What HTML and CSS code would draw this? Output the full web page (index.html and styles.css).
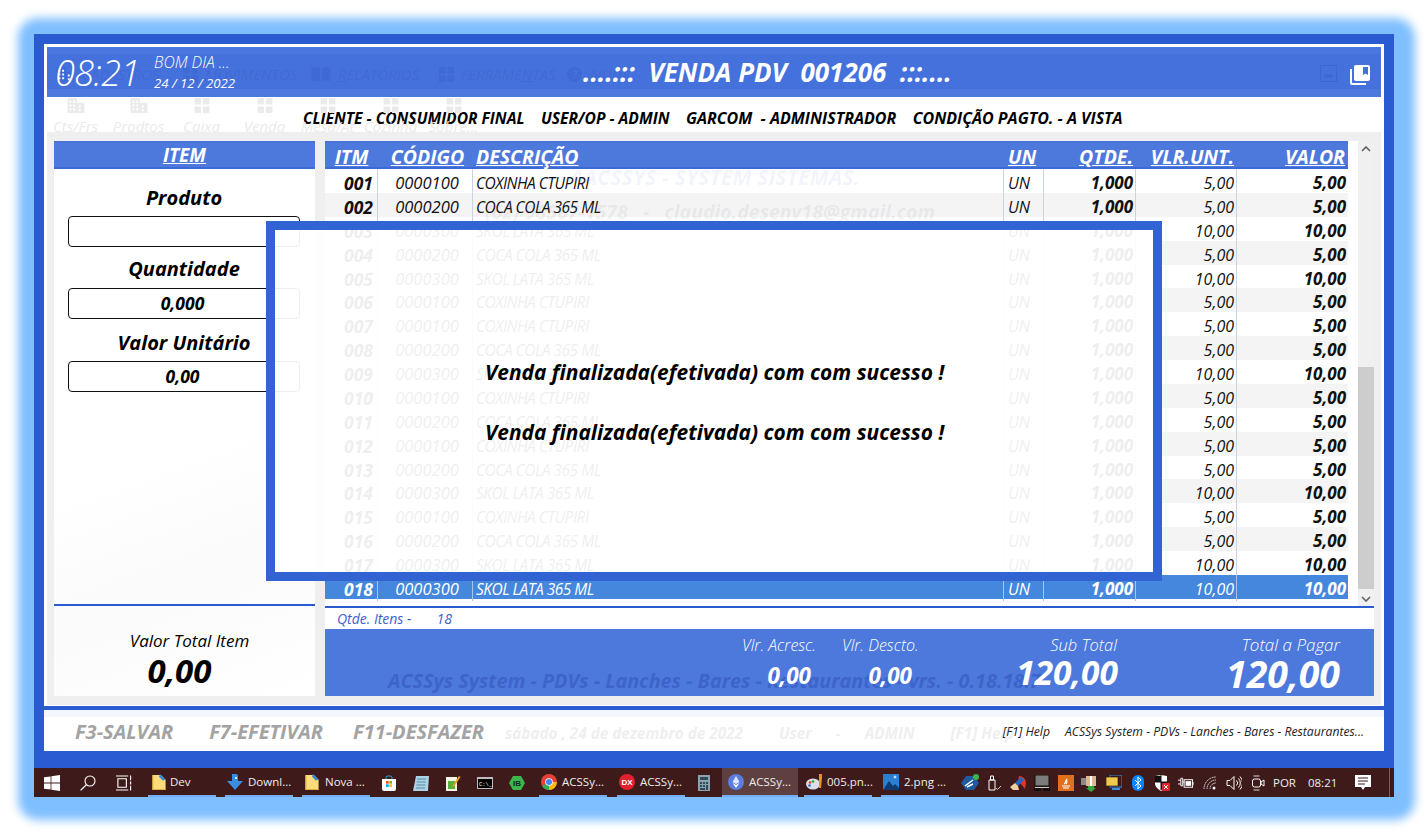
FILE: index.html
```html
<!DOCTYPE html>
<html lang="pt-BR">
<head>
    <meta charset="UTF-8">
    <title>ACSSys - Venda PDV</title>
    <link rel="stylesheet" href="styles.css">
</head>
<body>

<svg class="defs" width="0" height="0">
    <symbol id="i-build" viewBox="0 0 18 16"><path d="M0 0h10v16H0zM10 5h8v11h-8z" fill="currentColor"/><path d="M2 3h2v2H2zM6 3h2v2H6zM2 7h2v2H2zM6 7h2v2H6zM2 11h2v2H2zM6 11h2v2H6zM12 8h2v2h-2zM12 12h2v2h-2z" fill="#fff"/></symbol>
    <symbol id="i-tiles" viewBox="0 0 16 16"><path d="M0 0h7v7H0zM9 0h7v7H9zM0 9h7v7H0zM9 9h7v7H9z" fill="currentColor"/></symbol>
    <symbol id="i-book" viewBox="0 0 20 16"><path d="M0 1c3-1 7-1 9 1v14c-2-2-6-2-9-1zM20 1c-3-1-7-1-9 1v14c2-2 6-2 9-1z" fill="currentColor"/></symbol>
    <symbol id="i-folder" viewBox="0 0 14 17"><path d="M0 1h9l5 5v11H0z" fill="#fbdc7b"/><path d="M0 16h14v1H0zM0 1h1v16H0z" fill="#e0b040"/><path d="M8 0l6 6-3 1-4-4z" fill="#3a87d8"/></symbol>
</svg>

<div class="window">
    <div class="main">
        <div class="upper">
            <header class="titlebar">
                <div class="ghost-menu">
                    <div><svg class="gm-wide"><use href="#i-build"/></svg><span>CADASTROS</span></div>
                    <div><svg><use href="#i-tiles"/></svg><span>MOVIMENTOS</span></div>
                    <div><svg class="gm-wide"><use href="#i-book"/></svg><span><u>R</u>ELATÓRIOS</span></div>
                    <div><svg><use href="#i-tiles"/></svg><span>FERRAME<u>N</u>TAS</span></div>
                    <div><span class="ghost-help">?</span><span>AJUDA</span></div>
                </div>
                <div class="clock">08:21</div>
                <div class="greet">
                    <div>BOM DIA ...</div>
                    <div class="greet-date">24 / 12 / 2022</div>
                </div>
                <h1 class="page-title">....:::  VENDA PDV  001206  :::....</h1>
                <svg class="ico-image" viewBox="0 0 18 18"><rect x="0.5" y="0.5" width="17" height="17" fill="none" stroke="currentColor"/><path d="M4 13l3-4 2 2 2-2 3 4z" fill="currentColor"/></svg>
                <svg class="ico-books" viewBox="2 2 20 20"><path fill="#fff" d="M4 6H2v14c0 1.1.9 2 2 2h14v-2H4V6zm16-4H8c-1.1 0-2 .9-2 2v12c0 1.1.9 2 2 2h12c1.1 0 2-.9 2-2V4c0-1.1-.9-2-2-2zm0 10l-2.5-1.5L15 12V4h5v8z"/></svg>
            </header>

            <div class="infobar">
                <div class="ghost-tools">
                    <div><svg><use href="#i-build"/></svg>Cts/Frs</div>
                    <div><svg><use href="#i-build"/></svg>Prodtos</div>
                    <div><svg><use href="#i-tiles"/></svg>Caixa</div>
                    <div><svg><use href="#i-tiles"/></svg>Venda</div>
                    <div><svg><use href="#i-tiles"/></svg>Mesa/At</div>
                    <div><svg><use href="#i-tiles"/></svg>Cozinha</div>
                    <div><svg><use href="#i-tiles"/></svg>Sobre...</div>
                </div>
                <span>CLIENTE - CONSUMIDOR FINAL</span>
                <span>USER/OP - ADMIN</span>
                <span class="info-wide">GARCOM  - ADMINISTRADOR</span>
                <span class="info-wide">CONDIÇÃO PAGTO. - A VISTA</span>
            </div>

            <div class="content">
                <aside class="item-panel">
                    <div class="panel-head">ITEM</div>
                    <div class="item-form">
                        <label class="field-label">Produto</label>
                        <div class="field"></div>
                        <label class="field-label label-qty">Quantidade</label>
                        <div class="field field-qty">0,000</div>
                        <label class="field-label">Valor Unitário</label>
                        <div class="field">0,00</div>
                    </div>
                    <div class="item-total">
                        <div class="item-total-label">Valor Total Item</div>
                        <div class="item-total-value">0,00</div>
                    </div>
                </aside>

                <section class="sale">
                    <div class="grid-wrap">
                        <div class="ghost-company">AACSSYS - SYSTEM SISTEMAS.</div>
                        <div class="ghost-contact">(62) 98567-1578   -   claudio.desenv18@gmail.com</div>
                        <div class="grid">
                            <div class="row row-head"><span class="c-itm">ITM</span><span class="c-cod">CÓDIGO</span><span class="c-desc">DESCRIÇÃO</span><span class="c-un">UN</span><span class="c-num">QTDE.</span><span class="c-num">VLR.UNT.</span><span class="c-num">VALOR</span></div>
                            <div class="row"><span class="c-itm">001</span><span class="c-cod">0000100</span><span class="c-desc">COXINHA CTUPIRI</span><span class="c-un">UN</span><span class="c-num b">1,000</span><span class="c-num">5,00</span><span class="c-num b">5,00</span></div>
                            <div class="row"><span class="c-itm">002</span><span class="c-cod">0000200</span><span class="c-desc">COCA COLA 365 ML</span><span class="c-un">UN</span><span class="c-num b">1,000</span><span class="c-num">5,00</span><span class="c-num b">5,00</span></div>
                            <div class="row"><span class="c-itm">003</span><span class="c-cod">0000300</span><span class="c-desc">SKOL LATA 365 ML</span><span class="c-un">UN</span><span class="c-num b">1,000</span><span class="c-num">10,00</span><span class="c-num b">10,00</span></div>
                            <div class="row"><span class="c-itm">004</span><span class="c-cod">0000200</span><span class="c-desc">COCA COLA 365 ML</span><span class="c-un">UN</span><span class="c-num b">1,000</span><span class="c-num">5,00</span><span class="c-num b">5,00</span></div>
                            <div class="row"><span class="c-itm">005</span><span class="c-cod">0000300</span><span class="c-desc">SKOL LATA 365 ML</span><span class="c-un">UN</span><span class="c-num b">1,000</span><span class="c-num">10,00</span><span class="c-num b">10,00</span></div>
                            <div class="row"><span class="c-itm">006</span><span class="c-cod">0000100</span><span class="c-desc">COXINHA CTUPIRI</span><span class="c-un">UN</span><span class="c-num b">1,000</span><span class="c-num">5,00</span><span class="c-num b">5,00</span></div>
                            <div class="row"><span class="c-itm">007</span><span class="c-cod">0000100</span><span class="c-desc">COXINHA CTUPIRI</span><span class="c-un">UN</span><span class="c-num b">1,000</span><span class="c-num">5,00</span><span class="c-num b">5,00</span></div>
                            <div class="row"><span class="c-itm">008</span><span class="c-cod">0000200</span><span class="c-desc">COCA COLA 365 ML</span><span class="c-un">UN</span><span class="c-num b">1,000</span><span class="c-num">5,00</span><span class="c-num b">5,00</span></div>
                            <div class="row"><span class="c-itm">009</span><span class="c-cod">0000300</span><span class="c-desc">SKOL LATA 365 ML</span><span class="c-un">UN</span><span class="c-num b">1,000</span><span class="c-num">10,00</span><span class="c-num b">10,00</span></div>
                            <div class="row"><span class="c-itm">010</span><span class="c-cod">0000100</span><span class="c-desc">COXINHA CTUPIRI</span><span class="c-un">UN</span><span class="c-num b">1,000</span><span class="c-num">5,00</span><span class="c-num b">5,00</span></div>
                            <div class="row"><span class="c-itm">011</span><span class="c-cod">0000200</span><span class="c-desc">COCA COLA 365 ML</span><span class="c-un">UN</span><span class="c-num b">1,000</span><span class="c-num">5,00</span><span class="c-num b">5,00</span></div>
                            <div class="row"><span class="c-itm">012</span><span class="c-cod">0000100</span><span class="c-desc">COXINHA CTUPIRI</span><span class="c-un">UN</span><span class="c-num b">1,000</span><span class="c-num">5,00</span><span class="c-num b">5,00</span></div>
                            <div class="row"><span class="c-itm">013</span><span class="c-cod">0000200</span><span class="c-desc">COCA COLA 365 ML</span><span class="c-un">UN</span><span class="c-num b">1,000</span><span class="c-num">5,00</span><span class="c-num b">5,00</span></div>
                            <div class="row"><span class="c-itm">014</span><span class="c-cod">0000300</span><span class="c-desc">SKOL LATA 365 ML</span><span class="c-un">UN</span><span class="c-num b">1,000</span><span class="c-num">10,00</span><span class="c-num b">10,00</span></div>
                            <div class="row"><span class="c-itm">015</span><span class="c-cod">0000100</span><span class="c-desc">COXINHA CTUPIRI</span><span class="c-un">UN</span><span class="c-num b">1,000</span><span class="c-num">5,00</span><span class="c-num b">5,00</span></div>
                            <div class="row"><span class="c-itm">016</span><span class="c-cod">0000200</span><span class="c-desc">COCA COLA 365 ML</span><span class="c-un">UN</span><span class="c-num b">1,000</span><span class="c-num">5,00</span><span class="c-num b">5,00</span></div>
                            <div class="row"><span class="c-itm">017</span><span class="c-cod">0000300</span><span class="c-desc">SKOL LATA 365 ML</span><span class="c-un">UN</span><span class="c-num b">1,000</span><span class="c-num">10,00</span><span class="c-num b">10,00</span></div>
                            <div class="row row-sel"><span class="c-itm">018</span><span class="c-cod">0000300</span><span class="c-desc">SKOL LATA 365 ML</span><span class="c-un">UN</span><span class="c-num b">1,000</span><span class="c-num">10,00</span><span class="c-num b">10,00</span></div>
                        </div>
                        <div class="scrollbar">
                            <svg viewBox="0 0 10 6"><path d="M1 5l4-4 4 4" fill="none" stroke="#606060" stroke-width="1.6"/></svg>
                            <div class="scroll-track"><div class="scroll-thumb"></div></div>
                            <svg viewBox="0 0 10 6"><path d="M1 1l4 4 4-4" fill="none" stroke="#606060" stroke-width="1.6"/></svg>
                        </div>
                    </div>
                    <div class="count"><span>Qtde. Itens -</span><span>18</span></div>
                    <div class="totals">
                        <div class="ghost-system">ACSSys System - PDVs - Lanches - Bares - Restaurantes - vrs. - 0.18.18.7</div>
                        <div class="tot tot-acresc"><div class="tot-label">Vlr. Acresc.</div><div class="tot-small">0,00</div></div>
                        <div class="tot tot-descto"><div class="tot-label">Vlr. Descto.</div><div class="tot-small">0,00</div></div>
                        <div class="tot tot-sub"><div class="tot-label tot-label-sub">Sub Total</div><div class="tot-big">120,00</div></div>
                        <div class="tot tot-pay"><div class="tot-label tot-label-pay">Total a Pagar</div><div class="tot-big tot-huge">120,00</div></div>
                    </div>
                </section>
            </div>
        </div>

        <div class="rule"></div>

        <footer class="actions">
            <div class="ghost-status"><span>sábado , 24 de dezembro de 2022</span><span>User</span><span>-</span><span>ADMIN</span><span>[F1] Help</span></div>
            <span class="action">F3-SALVAR</span>
            <span class="action">F7-EFETIVAR</span>
            <span class="action">F11-DESFAZER</span>
            <span class="help">[F1] Help</span>
            <span class="help">ACSSys System - PDVs - Lanches - Bares - Restaurantes...</span>
        </footer>
    </div>

    <div class="taskbar">
        <div class="tb-slot"><svg class="s16" viewBox="0 0 16 16"><path fill="#fff" d="M0 2.3 6.6 1.4v6.2H0zM7.4 1.3 16 0v7.6H7.4zM0 8.4h6.6v6.2L0 13.7zM7.4 8.4H16V16l-8.6-1.2z"/></svg></div>
        <div class="tb-slot"><svg class="s16" viewBox="0 0 16 16"><circle cx="10" cy="6" r="5" fill="none" stroke="#fff" stroke-width="1.1"/><path d="M6.3 9.7.6 15.4" stroke="#fff" stroke-width="1.3"/></svg></div>
        <div class="tb-slot"><svg class="s16" viewBox="0 0 17 16"><path d="M2 3.5h9v9H2zM0 .5h13M0 15.5h13M15.5 0v5M15.5 6.500v3M15.500 11v5" fill="none" stroke="#fff" stroke-width="1.2"/></svg></div>

        <div class="tb-app app-dev"><svg class="s16"><use href="#i-folder"/></svg><span>Dev</span></div>
        <div class="tb-app"><svg class="s16" viewBox="0 0 16 16"><path fill="#3a8ee0" d="M5 0h4a2 2 0 0 1 2 2v5h5l-8 9-8-9h5z"/><circle cx="9" cy="4" r="1" fill="#fff"/></svg><span>Downl...</span></div>
        <div class="tb-app"><svg class="s16"><use href="#i-folder"/></svg><span>Nova ...</span></div>

        <div class="tb-pin"><svg class="s16" viewBox="0 0 16 16"><path fill="#fff" d="M1 4h14v10a2 2 0 0 1-2 2H3a2 2 0 0 1-2-2z"/><path d="M5 4V2a2 2 0 0 1 2-1h2a2 2 0 0 1 2 1v2" fill="none" stroke="#2aa0d8"/><path fill="#f25022" d="M5 6h2.700v2.700H5z"/><path fill="#7fba00" d="M8.300 6H11v2.700H8.300z"/><path fill="#00a4ef" d="M5 9.300h2.700V12H5z"/><path fill="#ffb900" d="M8.300 9.300H11V12H8.300z"/></svg></div>
        <div class="tb-pin"><svg class="s16" viewBox="0 0 16 16"><path fill="#a9d3e6" d="M3 1h13l-1 15H0z"/><path d="M4 4h9M3.700 7h9M3.400 10h9M3 13h9" stroke="#5d8ba6"/></svg></div>
        <div class="tb-pin"><svg class="s16" viewBox="0 0 16 16"><path fill="#f3f3e6" d="M1 2h11v14H1z"/><path fill="#58b038" d="M3 6h7v8H3z"/><path d="M8 10l6-9 1.500 1-6 9-2 1z" fill="#f0a020"/></svg></div>
        <div class="tb-pin"><svg class="cmd" viewBox="0 0 16 12"><rect width="16" height="12" fill="#bcbcbc"/><rect x="1" y="2" width="14" height="9" fill="#000"/><text x="2" y="9" font-size="5.500" fill="#fff" font-family="Liberation Mono">C:\_</text></svg></div>
        <div class="tb-pin"><svg class="s16" viewBox="0 0 16 16"><path fill="#3cb54a" d="M4 1h8l4 7-4 7H4L0 8z"/><text x="8" y="11" text-anchor="middle" font-size="8" font-weight="700" fill="#123" font-family="Liberation Sans">IB</text></svg></div>

        <div class="tb-app app-chrome"><svg class="s16" viewBox="0 0 16 16"><circle cx="8" cy="8" r="8" fill="#e34234"/><path d="M8 8 1 12a8 8 0 0 0 7 4z" fill="#35a853"/><path d="M8 8h8a8 8 0 0 1-8 8z" fill="#fbbc05"/><circle cx="8" cy="8" r="3.800" fill="#fff"/><circle cx="8" cy="8" r="3" fill="#4285f4"/></svg><span>ACSSy...</span></div>
        <div class="tb-app app-dx"><svg class="s16" viewBox="0 0 16 16"><circle cx="8" cy="8" r="8" fill="#e3202c"/><text x="8" y="11" text-anchor="middle" font-size="8" font-weight="700" fill="#fff" font-family="Liberation Sans">DX</text></svg><span>ACSSy...</span></div>
        <div class="tb-pin pin-calc"><svg class="s16" viewBox="0 0 12 16"><rect width="12" height="16" fill="#8ba3ad"/><rect x="2" y="2" width="8" height="3" fill="#2e4a5a"/><path d="M2 7h2v2H2zM5 7h2v2H5zM8 7h2v2H8zM2 10h2v2H2zM5 10h2v2H5zM8 10h2v5H8zM2 13h5v2H2z" fill="#2e4a5a"/></svg></div>
        <div class="tb-app app-active"><svg class="s16" viewBox="0 0 16 16"><circle cx="8" cy="8" r="8" fill="#5b7de0"/><path d="M8 2 4.500 8 8 10l3.500-2z" fill="#dfe6fb"/><path d="M4.500 9 8 14l3.500-5L8 11z" fill="#fff"/></svg><span>ACSSy...</span></div>
        <div class="tb-app app-paint"><svg class="s16" viewBox="0 0 16 16"><ellipse cx="7" cy="10" rx="7" ry="5.500" fill="#d9dfe8"/><circle cx="4" cy="8.500" r="1.300" fill="#e33"/><circle cx="7" cy="7.500" r="1.300" fill="#2a2"/><circle cx="3.500" cy="11.500" r="1.300" fill="#36c"/><path d="M13 0h3v4l-1 10h-2z" fill="#e8932a"/></svg><span>005.pn...</span></div>
        <div class="tb-app"><svg class="s16" viewBox="0 0 16 16"><rect width="16" height="16" fill="#2a7fd0"/><path d="M0 16 6 7l4 5 2-2 4 4v2z" fill="#103a70"/><path d="M12 1l.6 1.400L14 3l-1.400.6L12 5l-.6-1.400L10 3l1.400-.6z" fill="#fff"/></svg><span>2.png ...</span></div>

        <div class="tray">
            <div class="tray-i"><svg class="s18" viewBox="0 0 18 18"><path fill="#1d5aa0" d="M5 2h8l5 7-5 7H5L0 9z"/><path d="M4 12l8-6M6 13l6-3" stroke="#fff" stroke-width="1.500"/><circle cx="15" cy="3" r="3" fill="#3cb54a"/></svg></div>
            <div class="tray-i"><svg class="s16" viewBox="0 0 14 16"><path d="M2 5h6v10H2zM3.500 1h3v4h-3z" fill="none" stroke="#fff"/><path d="M9 13l1.500 1.500L14 11" fill="none" stroke="#ccc"/></svg></div>
            <div class="tray-i"><svg class="s16" viewBox="0 0 16 16"><path d="M9 1a7 7 0 0 1 7 7l-1 6-4-5-3-3z" fill="#d93a2b"/><path d="M11 2 5 8l3 3 6-6z" fill="#2a62c0"/><path d="M5 8l-5 4 3 3h6l-1-4z" fill="#f0d0a0"/></svg></div>
            <div class="tray-i"><svg class="s16" viewBox="0 0 16 16"><rect x="1" y="0" width="14" height="11" fill="#7c7c7c" stroke="#111"/><path d="M0 13h7v3H0zM9 13h7v3H9z" fill="#111"/><path d="M1 12h14v1H1z" fill="#ccc"/></svg></div>
            <div class="tray-i"><svg class="s16" viewBox="0 0 16 16"><rect width="16" height="16" fill="#e0701c"/><path d="M4 11h8M5 13h6M6 9c2-1 1-3 3-5-1 2 1 3-1 5" fill="none" stroke="#fff" stroke-width="1.100"/></svg></div>
            <div class="tray-i"><svg class="s18" viewBox="0 0 18 18"><rect x="0" y="4" width="7" height="7" fill="#8a8a8a"/><path d="M5 2h10v10H5z" fill="#e0b890"/><path d="M9 2h2v10H9z" fill="#fff"/><path d="M7 12h6v2h2l-5 4-5-4h2z" fill="#38a848"/></svg></div>
            <div class="tray-i"><svg class="s16" viewBox="0 0 16 16"><rect x="4" y="0" width="12" height="12" fill="none" stroke="#3a8ee0"/><rect x="0" y="2" width="12" height="9" fill="#f0c84a" stroke="#111" stroke-width=".6"/><path d="M6 13h8v2H6z" fill="#3a8ee0"/></svg></div>
            <div class="tray-i"><svg class="bt" viewBox="0 0 12 16"><rect width="12" height="16" rx="6" fill="#0a84ff"/><path d="M3 5l6 6-3 3V2l3 3-6 6" fill="none" stroke="#fff" stroke-width="1"/></svg></div>
            <div class="tray-i"><svg class="s16" viewBox="0 0 16 16"><path d="M1 1l6-1 6 1v7c0 4-3 6-6 8-3-2-6-4-6-8z" fill="#fff"/><path d="M1 7h12M7 0v15" stroke="#111"/><path d="M1 1h6v6H1zM7 7h6c0 3-2 5-6 8z" fill="#111"/><rect x="8" y="8" width="8" height="8" rx="1" fill="#e3202c"/><path d="M10 10l4 4M14 10l-4 4" stroke="#fff"/></svg></div>
            <div class="tray-i"><svg class="s16" viewBox="0 0 17 12"><path d="M0 3h3M0 7h3M3 1h2v8H3zM5 5h2" stroke="#fff" fill="none"/><rect x="6.500" y="2.500" width="9" height="8" fill="none" stroke="#fff"/><rect x="8" y="4" width="6" height="5" fill="#fff"/><path d="M16 5v3" stroke="#fff"/></svg></div>
            <div class="tray-i"><svg class="s14" viewBox="0 0 14 14"><path d="M1 13A12 12 0 0 1 13 1M4 13a9 9 0 0 1 9-9M7 13a6 6 0 0 1 6-6" fill="none" stroke="#ddd" stroke-dasharray="1.500 .6"/><circle cx="11" cy="12" r="1.500" fill="#fff"/></svg></div>
            <div class="tray-i"><svg class="s16" viewBox="0 0 16 16"><path d="M1 5.500h3l4-4v13l-4-4H1zM10.500 5.500a3.500 3.500 0 0 1 0 5M12.500 3.500a6.500 6.500 0 0 1 0 9M14 1.500a9.500 9.500 0 0 1 0 13" fill="none" stroke="#fff"/></svg></div>
            <div class="tray-i"><svg class="s16" viewBox="0 0 13 16"><path d="M2 1h6M2 15h6" stroke="#ddd"/><rect x="1" y="4" width="8" height="8" rx="2" fill="none" stroke="#fff"/><path d="M9.500 7l3-2v6l-3-2z" fill="none" stroke="#fff"/></svg></div>
            <span class="tb-lang">POR</span>
            <span class="tb-time">08:21</span>
            <svg class="tb-notif" viewBox="0 0 16 16"><path fill="#fff" d="M0 0h16v12h-6l-2 3-2-3H0z"/><path d="M3 3h10M3 6h10M3 9h7" stroke="#3f1a1a"/></svg>
        </div>
    </div>

    <!-- aviso por cima da tela -->
    <div class="notice">
        <p>Venda finalizada(efetivada) com com sucesso !</p>
        <p>Venda finalizada(efetivada) com com sucesso !</p>
    </div>
</div>

</body>
</html>
```

FILE: styles.css
```css
* {
    box-sizing: border-box;
}
html, body {
    height: 100%;
}
body {
    margin: 0;
    padding: 34px 0 0 34px;
    background-color: #fff;
    font-family: "Open Sans", "Liberation Sans", sans-serif;
}
.defs {
    position: absolute;
}

/* janela */
.window {
    position: relative;
    width: 1360px;
    height: 763px;
    background-color: #2a5bd0;
    display: flex;
    flex-direction: column;
}
.window::before {
    content: "";
    position: absolute;
    inset: -16px -21px -23px -16px;
    background-color: #7fbfff;
    border-radius: 20px;
    filter: blur(5px);
    z-index: -1;
}
.main {
    height: 707px;
    margin: 10px 10px 17px;
    background-color: #fff;
    display: flex;
    flex-direction: column;
}
.upper {
    padding: 3px 3px 0;
}

/* topo */
.titlebar {
    position: relative;
    height: 50px;
    background: linear-gradient(#4a76df 0, #4a76df 7px, #4571dc 7px, #4571dc 42px, #4d78de 42px);
    color: #fff;
    display: flex;
    align-items: center;
}
.ghost-menu {
    position: absolute;
    left: 8px;
    top: 17px;
    display: flex;
    font-size: 15px;
    font-style: italic;
    color: rgba(40, 70, 170, 0.18);
    white-space: nowrap;
}
.ghost-menu div {
    width: 128px;
    display: flex;
    align-items: center;
    gap: 7px;
}
.ghost-menu svg {
    width: 15px;
    height: 15px;
}
.ghost-menu .gm-wide {
    width: 20px;
}
.ghost-help {
    width: 15px;
    height: 15px;
    border-radius: 50%;
    background-color: rgba(40, 70, 170, 0.18);
    color: #4571dc;
    text-align: center;
    font-size: 12px;
    font-weight: 700;
    line-height: 15px;
}
.clock {
    position: relative;
    margin-left: 8px;
    width: 99px;
    font-size: 36px;
    font-style: italic;
    font-weight: 300;
    letter-spacing: -0.5px;
}
.greet {
    position: relative;
    font-size: 15.7px;
    font-style: italic;
    font-weight: 300;
    line-height: 21px;
    width: 429px;
    padding-top: 1px;
}
.greet-date {
    font-size: 13.2px;
    font-weight: 400;
}
.page-title {
    position: relative;
    margin: 0;
    width: 737px;
    font-size: 26px;
    font-weight: 700;
    font-style: italic;
    white-space: pre;
    color: #fff;
}
.ico-image {
    width: 17px;
    height: 17px;
    margin: 3px 13px 0 0;
    color: rgba(40, 70, 170, 0.25);
}
.ico-books {
    width: 20px;
    height: 20px;
    margin-top: 6px;
}

.infobar {
    position: relative;
    height: 35px;
    padding: 6px 0 0 256px;
    display: flex;
    align-items: center;
    gap: 16.500px;
    font-size: 15.6px;
    font-weight: 700;
    font-style: italic;
    color: #000;
    white-space: pre;
}
.info-wide {
    font-size: 16px;
}
.ghost-tools {
    position: absolute;
    left: -3px;
    top: 1px;
    display: flex;
    font-size: 15px;
    font-weight: 400;
    color: #ebebeb;
}
.ghost-tools div {
    width: 63px;
    display: flex;
    flex-direction: column;
    align-items: center;
    gap: 3px;
    white-space: nowrap;
}
.ghost-tools svg {
    width: 18px;
    height: 15px;
}

/* conteudo */
.content {
    height: 573px;
    padding: 9px 7px;
    background-color: #efefef;
    display: flex;
    gap: 10px;
}
.item-panel {
    width: 261px;
    display: flex;
    flex-direction: column;
    background: linear-gradient(160deg, #fff 55%, #fbfbfb 75%, #fff 100%);
}
.panel-head {
    height: 28px;
    background-color: #4d78dc;
    border-top: 2px solid #4872da;
    border-bottom: 2px solid #3d69d6;
    color: #fff;
    font-size: 19px;
    font-weight: 700;
    font-style: italic;
    text-decoration: underline;
    text-align: center;
    line-height: 24px;
}
.item-form {
    height: 437px;
    padding: 16px 15px 0 14px;
    border-bottom: 2px solid #2a5bd0;
    text-align: center;
}
.field-label {
    display: block;
    font-size: 20px;
    font-weight: 700;
    font-style: italic;
    line-height: 26px;
    color: #000;
}
.label-qty {
    margin-top: -1px;
}
.field {
    height: 31px;
    margin: 5px 0 10px;
    padding-right: 3px;
    border: 1px solid #111;
    border-radius: 4px;
    font-size: 17.5px;
    font-weight: 700;
    font-style: italic;
    line-height: 29px;
}
.field-qty {
    margin: 6px 0 11px;
}
.item-total {
    height: 90px;
    padding-top: 25px;
    text-align: center;
}
.item-total-label {
    padding-left: 10px;
    font-size: 17px;
    font-style: italic;
    line-height: 20px;
}
.item-total-value {
    padding-right: 10px;
    font-size: 33px;
    font-weight: 700;
    font-style: italic;
    line-height: 40px;
}

/* grade */
.sale {
    width: 1049px;
    display: flex;
    flex-direction: column;
}
.grid-wrap {
    position: relative;
    height: 467px;
    display: flex;
    gap: 10px;
    background-color: #fff;
    border-bottom: 2px solid #2a5bd0;
}
.grid {
    width: 1023px;
}
.row {
    height: 23.88px;
    display: grid;
    grid-template-columns: 53px 95px 531px 40px 92px 101px 111px;
    font-size: 16px;
    font-style: italic;
    line-height: 24px;
    color: #111;
}
.row:nth-child(odd) {
    background-color: #f4f4f4;
}
.row span {
    padding-top: 2px;
    border-right: 1px solid #c8d4e2;
    white-space: nowrap;
}
.row span:last-child {
    border-right: 0;
}
.c-itm {
    text-align: right;
    padding-right: 4px;
    font-size: 17.5px;
    font-weight: 700;
}
.c-cod {
    text-align: center;
    padding-left: 4px;
    font-size: 16.5px;
}
.c-desc {
    padding-left: 3px;
    font-size: 15.5px;
    letter-spacing: -0.5px;
}
.c-un {
    padding-left: 4px;
}
.c-num {
    text-align: right;
    padding-right: 2px;
}
.row .b {
    font-size: 17px;
    font-weight: 700;
}
.row-head,
.row-head:nth-child(odd) {
    height: 28px;
    background-color: #4d78dc;
    border-top: 2px solid #4872da;
    border-bottom: 2px solid #3d69d6;
    color: #fff;
    font-weight: 700;
    line-height: 27px;
}
.row-head span {
    padding-top: 0;
    border: 0;
    font-size: 19.5px;
    letter-spacing: 0;
    text-decoration: underline;
}
.row-head .c-itm {
    text-align: center;
    padding-right: 0;
}
.row-head .c-num {
    padding-right: 3px;
}
.row-sel,
.row-sel:nth-child(odd) {
    background-color: #4587dc;
    color: #fff;
}
.row-sel span {
    border-right-color: #a8c4ea;
}
.ghost-company {
    position: absolute;
    left: 245px;
    top: 21px;
    font-size: 21.5px;
    font-weight: 700;
    font-style: italic;
    color: rgba(60, 90, 200, 0.07);
    white-space: pre;
}
.ghost-contact {
    position: absolute;
    left: 160px;
    top: 57px;
    font-size: 19.5px;
    font-weight: 700;
    font-style: italic;
    color: rgba(60, 60, 90, 0.08);
    white-space: pre;
}
.scrollbar {
    width: 16px;
    height: 465px;
    background-color: #f0f0f0;
    display: flex;
    flex-direction: column;
    align-items: center;
    justify-content: space-between;
    padding: 5px 0 4px;
}
.scrollbar svg {
    width: 10px;
    height: 6px;
    flex: none;
}
.scroll-track {
    flex: 1;
    width: 100%;
    padding-top: 215px;
    margin-bottom: 3px;
}
.scroll-thumb {
    height: 222px;
    background-color: #cdcdcd;
}
.count {
    height: 21px;
    padding-left: 12px;
    display: flex;
    gap: 25px;
    background-color: #fff;
    font-size: 14px;
    font-style: italic;
    line-height: 21px;
    color: #3b62d0;
}
.totals {
    position: relative;
    height: 67px;
    background-color: #4d78dc;
    display: flex;
    justify-content: flex-end;
    padding-right: 34px;
    color: #fff;
    text-align: right;
    font-style: italic;
}
.ghost-system {
    position: absolute;
    left: 63px;
    top: 38px;
    font-size: 19.8px;
    font-weight: 700;
    color: rgba(42, 75, 180, 0.45);
    white-space: nowrap;
}
.tot {
    position: relative;
}
.tot-acresc {
    width: 80px;
}
.tot-descto {
    width: 75px;
    margin-left: 26px;
}
.tot-sub {
    width: 110px;
    margin-left: 91px;
}
.tot-pay {
    width: 130px;
    margin-left: 92px;
}
.tot-label {
    margin-top: 6px;
    font-size: 16px;
    font-weight: 300;
    line-height: 20px;
    white-space: nowrap;
}
.tot-label-sub {
    font-size: 16.5px;
    padding-right: 1px;
}
.tot-label-pay {
    font-size: 17px;
}
.tot-small {
    padding-right: 5px;
    margin-top: 6px;
    font-size: 22.5px;
    font-weight: 700;
    line-height: 30px;
}
.tot-big {
    font-size: 33.5px;
    font-weight: 700;
    line-height: 36px;
    margin-top: -1px;
}
.tot-huge {
    font-size: 37.5px;
    margin-top: 1px;
}

/* rodape */
.rule {
    height: 4px;
    margin-top: 1px;
    background-color: #2a5bd0;
}
.actions {
    position: relative;
    flex: 1;
    background: linear-gradient(#f3f6fc 0, #f3f6fc 7px, #fff 7px);
    display: flex;
    align-items: center;
    padding: 1px 20px 0 31px;
}
.action {
    margin-right: 36px;
    font-size: 20px;
    font-weight: 700;
    font-style: italic;
    color: #a3a3a3;
}
.action + .action {
    margin-right: 30px;
}
.action + .action + .action {
    margin-right: auto;
}
.help {
    position: relative;
    font-size: 12.2px;
    font-style: italic;
    color: #222;
    white-space: nowrap;
}
.help + .help {
    margin-left: 15px;
}
.ghost-status {
    position: absolute;
    left: 461px;
    top: 13px;
    display: flex;
    gap: 24px;
    font-size: 15.3px;
    font-weight: 700;
    font-style: italic;
    color: #efefef;
    white-space: nowrap;
}
.ghost-status span:first-child {
    margin-right: 12px;
}
.ghost-status span:last-child {
    margin-left: 12px;
}

/* barra de tarefas */
.taskbar {
    height: 29px;
    background: linear-gradient(to left, #3f1a1a 4px, #7a5a5a 4px, #7a5a5a 5px, #3f1a1a 5px);
    display: flex;
    align-items: center;
    font-size: 11.5px;
    color: #eee;
    white-space: nowrap;
}
.s16 {
    width: 16px;
    height: 16px;
    flex: none;
}
.s18 {
    width: 18px;
    height: 18px;
}
.s14 {
    width: 14px;
    height: 14px;
}
.cmd {
    width: 16px;
    height: 12px;
}
.bt {
    width: 12px;
    height: 16px;
}
.tb-slot {
    width: 36px;
    display: flex;
    justify-content: center;
}
.tb-app {
    width: 68px;
    height: 29px;
    margin-left: 9px;
    padding: 0 0 0 2px;
    display: flex;
    align-items: center;
    gap: 5px;
    border-bottom: 2px solid #74aef0;
}
.app-dev {
    margin-left: 6px;
    padding-left: 3px;
    gap: 3px;
}
.tb-pin {
    width: 32px;
    display: flex;
    justify-content: center;
}
.tb-pin:nth-child(7) {
    margin-left: 3px;
}
.app-chrome {
    margin-left: 6px;
}
.app-dx {
    margin-left: 10px;
}
.pin-calc {
    margin-left: 3px;
}
.app-active {
    width: 76px;
    margin-left: 2px;
    padding-left: 6px;
    background-color: #5f4040;
}
.app-paint {
    margin-left: 6px;
}
.tray {
    margin-left: 9px;
    display: flex;
    align-items: center;
}
.tray-i {
    width: 24px;
    display: flex;
    justify-content: center;
}
.tb-lang {
    margin-left: 3px;
}
.tb-time {
    margin-left: 12px;
}
.tb-notif {
    width: 16px;
    height: 16px;
    margin-left: 18px;
}

/* aviso */
.notice {
    position: absolute;
    left: 232px;
    top: 187px;
    width: 896px;
    height: 360px;
    border: 9px solid #3263d3;
    background-color: rgba(255, 255, 255, 0.93);
    display: flex;
    flex-direction: column;
    justify-content: center;
    gap: 30px;
    padding: 2px 0 0 210px;
}
.notice p {
    margin: 0;
    font-size: 20.9px;
    font-weight: 700;
    font-style: italic;
    line-height: 30px;
    color: #000;
}
```
